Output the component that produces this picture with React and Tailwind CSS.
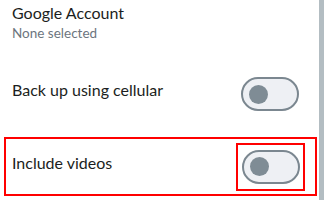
import React from "react";

function Toggle() {
  return (
    <div className="flex h-[34px] w-[58px] items-center rounded-full border-2 border-[#7b8790] bg-[#eef0f4] pl-[6px]">
      <div className="h-[19px] w-[19px] rounded-full bg-[#7f8c95]" />
    </div>
  );
}

export default function App() {
  return (
    <div
      className="flex h-[200px] w-[324px] overflow-hidden bg-white text-[#1b1e21]"
      style={{ fontFamily: "Lato, 'Noto Sans', sans-serif" }}
    >
      <div className="flex w-[319px] flex-col">
        <div className="flex flex-col pl-3 pt-[3px]">
          <div className="text-[16px] leading-[19px]">Google Account</div>
          <div className="mt-[3px] text-[13.5px] leading-[16px] text-[#6c757e]">None selected</div>
        </div>
        <div className="mt-[19px] flex h-[68px] items-center justify-between pl-3 pr-[20px]">
          <div className="pb-[9px] text-[16px] leading-[19px]">Back up using cellular</div>
          <Toggle />
        </div>
        <div className="ml-1 mr-[2px] mt-[9px] flex h-[59px] items-center justify-between border-2 border-[#f00] pl-[6px] pr-[10px]">
          <div className="pb-[9px] text-[16px] leading-[19px]">Include videos</div>
          <div className="flex h-[48px] w-[69px] items-center justify-center border-2 border-[#f00]">
            <Toggle />
          </div>
        </div>
      </div>
      <div className="h-full w-[5px] bg-[#b3bdc2]" />
    </div>
  );
}
